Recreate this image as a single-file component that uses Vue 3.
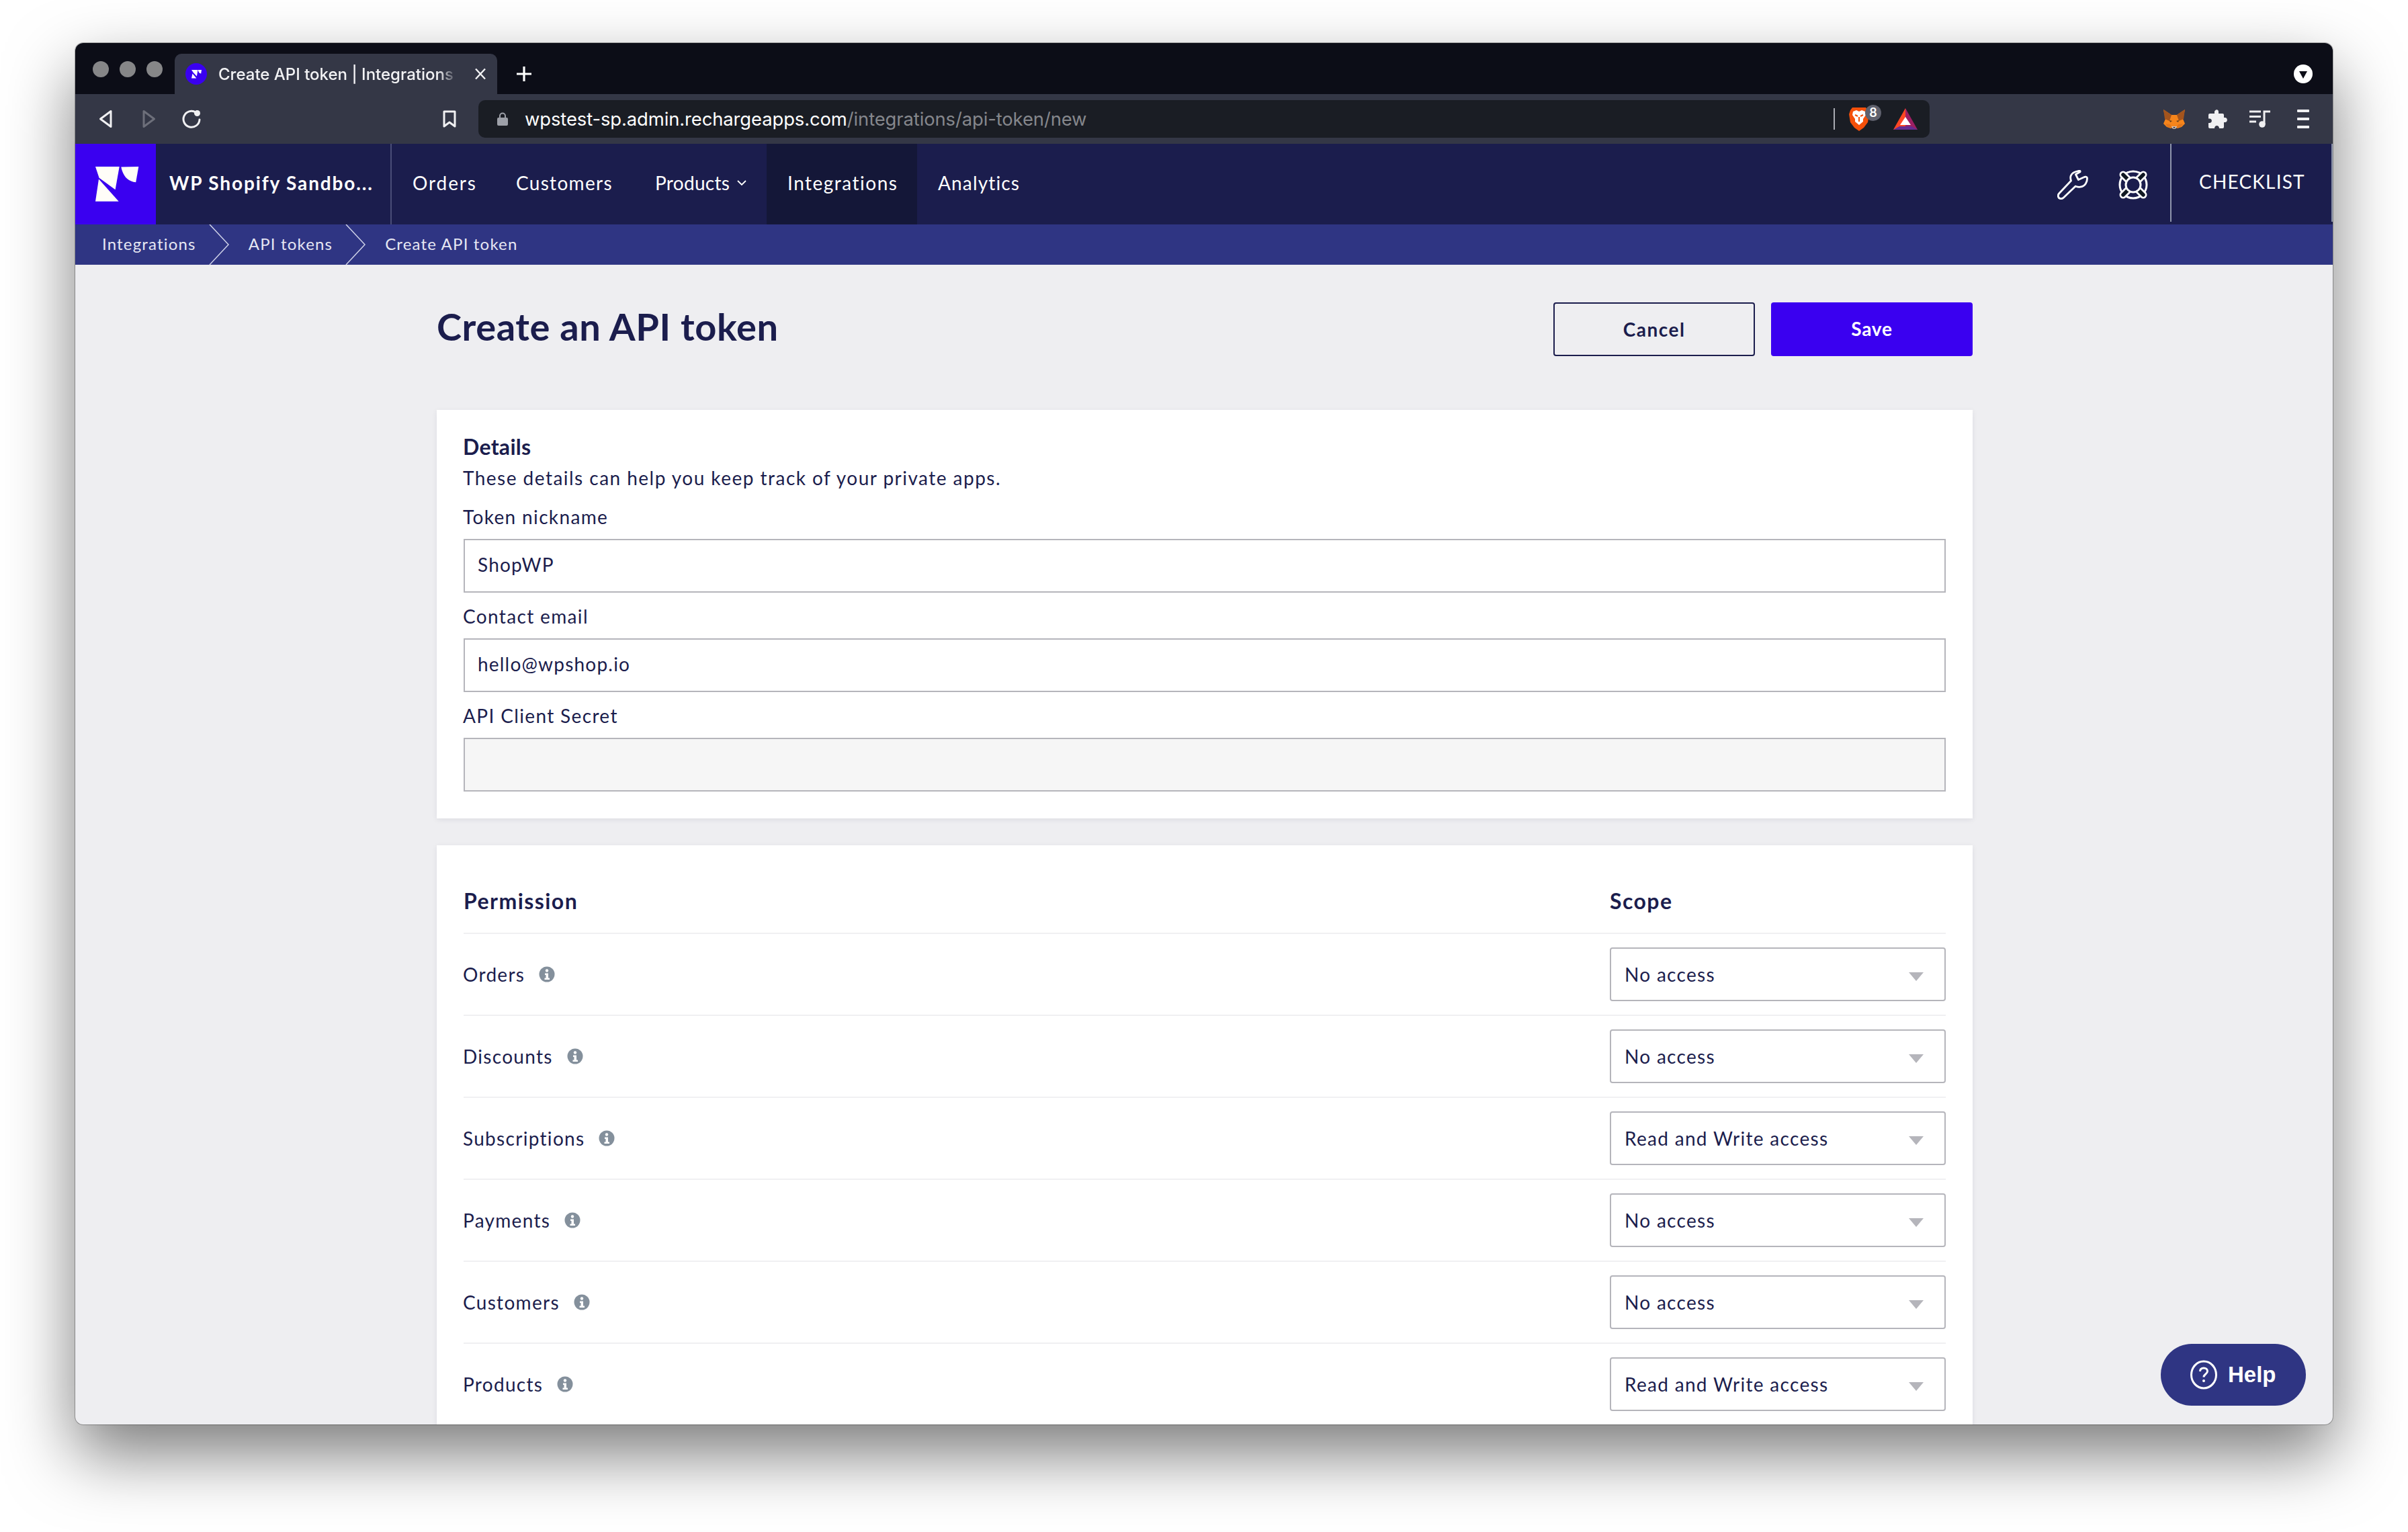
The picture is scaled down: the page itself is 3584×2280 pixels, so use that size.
<script setup>
const navLinks = [
  { label: 'Orders', width: 154, spacing: 1.9 },
  { label: 'Customers', width: 207, spacing: 1.3 },
  { label: 'Products', width: 197, spacing: 0.3, caret: true },
  { label: 'Integrations', width: 224, spacing: 1.5, active: true },
  { label: 'Analytics', width: 180, spacing: 1.15 }
]
const crumbs = ['Integrations', 'API tokens', 'Create API token']
const fields = [
  { label: 'Token nickname', value: 'ShopWP' },
  { label: 'Contact email', value: 'hello@wpshop.io' },
  { label: 'API Client Secret', value: '', disabled: true }
]
const perms = [
  { name: 'Orders', scope: 'No access' },
  { name: 'Discounts', scope: 'No access' },
  { name: 'Subscriptions', scope: 'Read and Write access' },
  { name: 'Payments', scope: 'No access' },
  { name: 'Customers', scope: 'No access' },
  { name: 'Products', scope: 'Read and Write access' }
]
</script>

<template>
  <div class="stage">
    <div class="window">
      <div class="tabstrip">
        <div class="lights"><i></i><i></i><i></i></div>
        <div class="tab">
          <svg class="favicon" viewBox="0 0 32 32">
            <circle cx="16" cy="16" r="16" fill="#3a00f0" />
            <path d="M9 10h9.500l-1.600 9.500-5-5.200zM10.500 15.500l5.800 7H9zM18.800 10H24l-.8 5.500c-2.500 0-4-2.400-4.400-5.500z" fill="#fff" />
          </svg>
          <span class="tab-title">Create API token | Integrations</span>
          <svg class="tab-close" viewBox="0 0 18 18"><path d="M2 1.500l14 15M16 1.500L2 16.500" stroke="#f2f2f4" stroke-width="2.400" /></svg>
        </div>
        <svg class="plus" viewBox="0 0 24 24"><path d="M12 1v22M1 12h22" stroke="#fff" stroke-width="3.200" /></svg>
        <div class="tabmenu"><svg viewBox="0 0 28 28"><circle cx="14" cy="14" r="14" fill="#fff" /><path d="M8 10h12l-6 11z" fill="#0c0d17" /></svg></div>
      </div>

      <div class="toolbar">
        <svg class="tb-back" viewBox="0 0 20 28"><path d="M18 2.500v23L2.500 14z" fill="none" stroke="#f0f0f2" stroke-width="3" stroke-linejoin="round" /></svg>
        <svg class="tb-fwd" viewBox="0 0 20 28"><path d="M2 2.500v23L17.500 14z" fill="none" stroke="#6d6f7a" stroke-width="3" stroke-linejoin="round" /></svg>
        <svg class="tb-reload" viewBox="0 0 28 28">
          <path d="M20.500 4.200A12 12 0 1 0 26 15" fill="none" stroke="#f0f0f2" stroke-width="3" stroke-linecap="round" />
          <circle cx="22.500" cy="5.500" r="4.500" fill="#f0f0f2" />
        </svg>
        <svg class="tb-mark" viewBox="0 0 20 26"><path d="M2 2h16v22l-8-6-8 6z" fill="none" stroke="#f0f0f2" stroke-width="3" stroke-linejoin="round" /></svg>
        <div class="address">
          <svg class="lock" viewBox="0 0 16 20"><path d="M4 9V5.500a4 4 0 0 1 8 0V9" fill="none" stroke="#9da0a8" stroke-width="2" /><rect x="0" y="8" width="16" height="12" rx="2" fill="#9da0a8" /></svg>
          <span class="url"><b>wpstest-sp.admin.rechargeapps.com</b>/integrations/api-token/new</span>
          <span class="addr-sep"></span>
          <span class="brave">
            <svg viewBox="0 0 30 36">
              <path d="M5 1h20l3 4 2 6-2 12-6 8-7 5-7-5-6-8L0 11l2-6z" fill="#f4500a" />
              <path d="M6 7l5-2 4 2 4-2 5 2 1 5-4 6v4l-6 5-6-5v-4L5 12z" fill="#fff" />
              <path d="M9 12l4 2M21 12l-4 2M15 15v7" stroke="#f4500a" stroke-width="2" />
            </svg>
            <em>8</em>
          </span>
          <svg class="bat" viewBox="0 0 36 32">
            <path d="M18 0l18 32H18z" fill="#9e1f63" />
            <path d="M18 0L0 32h18z" fill="#ff4724" />
            <path d="M0 32l9-5h18l9 5z" fill="#662d91" />
            <path d="M18 13l8 12H10z" fill="#fff" />
          </svg>
        </div>
        <svg class="fox" viewBox="0 0 32 29">
          <path d="M0 0l12 8h8l12-8-3 14 3 7-5 5-6 2-2-1h-6l-2 1-6-2-5-5 3-7z" fill="#f6851b" />
          <path d="M0 0l12 8-3 9-7-3zM32 0L20 8l3 9 7-3z" fill="#a3541d" />
          <path d="M3 21l7 1 3 5-7-1zM29 21l-7 1-3 5 7-1z" fill="#e2761b" />
          <path d="M12 25h8l-1 3-3 1-3-1z" fill="#d7c1b3" />
          <path d="M14 26h4l-2 2z" fill="#233447" />
          <path d="M9 16l4 1-3 2zM23 16l-4 1 3 2z" fill="#5c3b1f" />
        </svg>
        <svg class="puzzle" viewBox="0 0 29 28">
          <path d="M11 1.500c1.500-2 5-1.500 5 1.800V6h6a2 2 0 0 1 2 2v4h1.500c4.500 0 4.500 7 0 7H24v7a2 2 0 0 1-2 2h-5c0-5.500-7-5.500-7 0H3a2 2 0 0 1-2-2v-6h1.500c4.500 0 4.500-6.500 0-6.500H1V8a2 2 0 0 1 2-2h7V3.300c0-.7.400-1.300 1-1.800z" fill="#f0f0f2" />
        </svg>
        <svg class="music" viewBox="0 0 32 26">
          <path d="M0 2h17M0 9.500h17M0 17h10" stroke="#f0f0f2" stroke-width="3" />
          <path d="M22 21V2h9" fill="none" stroke="#f0f0f2" stroke-width="3" />
          <circle cx="19" cy="21" r="4.800" fill="#f0f0f2" />
        </svg>
        <div class="hamb"><i></i><i></i><i></i></div>
      </div>

      <header class="nav">
        <div class="brand">
          <svg viewBox="0 0 65 52">
            <path d="M0 0h35.700l-6.100 34.300L5.600 16.700z" fill="#fffdf8" />
            <path d="M5 18.500l29.700 33.200H0z" fill="#fffdf8" />
            <path d="M38.300.5L64.300 0l-4.100 23.300C48 22 41 14 38.300.5z" fill="#fffdf8" />
          </svg>
        </div>
        <div class="store">WP Shopify Sandbo...</div>
        <nav class="links">
          <a v-for="l in navLinks" :key="l.label" class="link" :class="{ active: l.active }" :style="{ width: l.width + 'px', letterSpacing: l.spacing + 'px' }">
            {{ l.label }}
            <svg v-if="l.caret" class="caret" viewBox="0 0 14 9"><path d="M1 1l6 6 6-6" fill="none" stroke="#fff" stroke-width="1.800" /></svg>
          </a>
        </nav>
        <div class="nav-right">
          <svg class="wrench" viewBox="0 0 46 44">
            <path d="M31 1.500c3.500-1 3.300.5 3 1.300l-6.600 3.700 4 8 8.300-3.800c1-.6 4.800-1.500 4.800 2 0 4.500-2.500 11.500-10 12.500-3.600.5-5-.2-7.500-1L9.500 41c-3 3-7.200 1.800-8-1-.8-2.500 0-4 1.500-5.500L20.500 16c-1-3-1.300-5-.3-7.500C22 4.500 26 2.500 31 1.500z" fill="none" stroke="#fff" stroke-width="2.800" stroke-linejoin="round" />
          </svg>
          <svg class="buoy" viewBox="0 0 44 44">
            <circle cx="22" cy="22" r="20" fill="none" stroke="#fff" stroke-width="3" />
            <g stroke="#fff" stroke-width="11" stroke-linecap="round"><path d="M7 7l8 8M37 7l-8 8M7 37l8-8M37 37l-8-8" /></g>
            <g stroke="#101822" stroke-width="5.500" stroke-linecap="round"><path d="M7 7l8 8M37 7l-8 8M7 37l8-8M37 37l-8-8" /></g>
            <circle cx="22" cy="22" r="11" fill="#1b1d4d" stroke="#fff" stroke-width="3" />
          </svg>
          <div class="checklist"><span>CHECKLIST</span></div>
        </div>
      </header>

      <div class="crumbs">
        <template v-for="(c, i) in crumbs" :key="c">
          <span class="crumb">{{ c }}</span>
          <svg v-if="i < crumbs.length - 1" class="crumb-sep" viewBox="0 0 30 60"><path d="M1 0l28 30L1 60" fill="none" stroke="#cfd2e8" stroke-width="1.500" /></svg>
        </template>
      </div>

      <main class="page">
        <div class="column">
          <div class="head">
            <h1>Create an API token</h1>
            <div class="actions">
              <button class="btn ghost">Cancel</button>
              <button class="btn primary">Save</button>
            </div>
          </div>

          <section class="card details">
            <h2>Details</h2>
            <p>These details can help you keep track of your private apps.</p>
            <div v-for="f in fields" :key="f.label" class="field">
              <label>{{ f.label }}</label>
              <div class="input" :class="{ disabled: f.disabled }">{{ f.value }}</div>
            </div>
          </section>

          <section class="card perms">
            <div class="row headrow">
              <span>Permission</span>
              <span class="scope-h">Scope</span>
            </div>
            <div v-for="p in perms" :key="p.name" class="row">
              <span class="perm">
                {{ p.name }}
                <svg class="info" viewBox="0 0 24 24">
                  <circle cx="12" cy="12" r="11.500" fill="#84909c" />
                  <circle cx="12" cy="6.500" r="2.200" fill="#fff" />
                  <path d="M9 10.500h5v7h2v2.500H8.500v-2.500h2V13H9z" fill="#fff" />
                </svg>
              </span>
              <div class="select">
                <span>{{ p.scope }}</span>
                <i class="arrow"></i>
              </div>
            </div>
          </section>
        </div>

        <button class="help">
          <svg viewBox="0 0 40 44"><ellipse cx="20" cy="22" rx="18.500" ry="20" fill="none" stroke="#fff" stroke-width="3" /><path d="M14.500 17c0-3.500 2.500-5 5.500-5s5.500 1.800 5.500 4.800c0 4.200-5.500 4.200-5.500 8.700" fill="none" stroke="#fff" stroke-width="3" /><circle cx="20" cy="31" r="2" fill="#fff" /></svg>
          <span>Help</span>
        </button>
      </main>
    </div>
  </div>
</template>

<style scoped>
.stage { width: 3584px; height: 2280px; background: #fff; padding: 64px 0 0 112px; box-sizing: border-box; overflow: hidden; }
.window {
  width: 3360px; height: 2056px; border-radius: 12px; overflow: hidden; display: flex; flex-direction: column;
  background: #eeeef1; position: relative;
  box-shadow: 0 0 0 1px rgba(0,0,0,.28), 0 44px 100px rgba(0,0,0,.52);
}

.tabstrip { height: 76px; flex: none; background: #0c0d17; display: flex; }
.lights { display: flex; gap: 16px; padding: 27px 0 0 26px; }
.lights i { width: 24px; height: 24px; border-radius: 50%; background: #868688; display: block; }
.tab { margin: 16px 0 0 18px; width: 480px; height: 60px; background: #343746; border-radius: 10px 10px 0 0; display: flex; align-items: center; position: relative; box-sizing: border-box; padding-left: 16px; }
.favicon { width: 32px; height: 32px; flex: none; }
.tab-title { margin-left: 17px; width: 356px; font: 500 24px Inter, sans-serif; color: #f2f2f4; white-space: nowrap; overflow: hidden; -webkit-mask-image: linear-gradient(90deg, #000 92%, transparent); mask-image: linear-gradient(90deg, #000 92%, transparent); }
.tab-close { width: 18px; height: 18px; margin-left: 25px; flex: none; }
.plus { width: 24px; height: 24px; margin: 34px 0 0 28px; flex: none; }
.tabmenu { margin-left: auto; padding: 32px 30px 0 0; }
.tabmenu svg { width: 28px; height: 28px; display: block; }

.toolbar { height: 74px; flex: none; background: #343746; display: flex; align-items: center; position: relative; }
.tb-back { width: 20px; height: 28px; margin-left: 35px; flex: none; }
.tb-fwd { width: 20px; height: 28px; margin-left: 45px; flex: none; }
.tb-reload { width: 28px; height: 28px; margin-left: 39px; flex: none; }
.tb-mark { width: 20px; height: 26px; margin-left: 360px; flex: none; }
.address { width: 2160px; height: 56px; margin-left: 33px; background: #1a1d24; border-radius: 10px; display: flex; align-items: center; flex: none; box-sizing: border-box; padding-left: 28px; }
.lock { width: 16px; height: 20px; flex: none; }
.url { margin-left: 25px; font: 400 27.400px Inter, sans-serif; color: #85878c; width: 1948px; white-space: nowrap; flex: none; letter-spacing: -.1px; }
.url b { font-weight: 400; color: #fff; }
.addr-sep { width: 2px; height: 32px; background: #a9abb2; flex: none; }
.brave { position: relative; width: 30px; height: 36px; margin-left: 21px; flex: none; }
.brave svg { width: 30px; height: 36px; display: block; }
.brave em { position: absolute; left: 24px; top: -3px; width: 24px; height: 24px; border-radius: 12px; background: #5f616d; color: #fff; font: 600 18px/24px Inter, sans-serif; text-align: center; }
.bat { width: 36px; height: 32px; margin-left: 36px; flex: none; }
.fox { width: 32px; height: 29px; margin-left: 348px; flex: none; }
.puzzle { width: 29px; height: 28px; margin-left: 34px; flex: none; }
.music { width: 32px; height: 26px; margin-left: 33px; flex: none; }
.hamb { width: 18px; margin-left: 39px; display: flex; flex-direction: column; gap: 8px; }
.hamb i { display: block; height: 4px; background: #f0f0f2; border-radius: 1px; }

.nav { height: 120px; flex: none; background: #1b1d4d; display: flex; color: #fff; font-family: Lato, sans-serif; }
.brand { width: 120px; background: #3a00f0; display: flex; align-items: center; justify-content: center; flex: none; }
.brand svg { width: 65px; height: 52px; margin-left: 4px; }
.store { width: 351px; box-sizing: border-box; padding-left: 20px; border-right: 2px solid #4a4d78; font-size: 28px; font-weight: 700; line-height: 116px; letter-spacing: 1.850px; white-space: nowrap; flex: none; }
.links { display: flex; }
.link { display: flex; align-items: center; padding: 0 0 4px 31px; box-sizing: border-box; font-size: 28px; white-space: nowrap; flex: none; }
.link.active { background: #141738; }
.caret { width: 14px; height: 9px; margin-left: 11px; flex: none; }
.nav-right { margin-left: auto; display: flex; align-items: flex-start; height: 116px; }
.wrench { width: 46px; height: 44px; margin-top: 39px; }
.buoy { width: 44px; height: 44px; margin: 39px 0 0 45px; }
.checklist { margin-left: 33px; width: 242px; height: 116px; box-sizing: border-box; border-left: 2px solid #8f96ad; border-right: 2px solid #8f96ad; display: flex; padding: 38px 0 0 41px; font-size: 28px; letter-spacing: 1.200px; line-height: 36px; }

.crumbs { height: 60px; flex: none; background: #2f3583; display: flex; align-items: center; color: #e6e7f3; font: 400 24px Lato, sans-serif; letter-spacing: 1.180px; padding-left: 40px; }
.crumb { padding-bottom: 3px; }
.crumb-sep { width: 30px; height: 60px; margin: 0 29px 0 19px; flex: none; }

.page { flex: 1; min-height: 0; overflow: hidden; position: relative; font-family: Lato, sans-serif; color: #1b1d4d; }
.column { width: 2286px; margin-left: 538px; }
.head { display: flex; justify-content: space-between; height: 216px; padding-top: 56px; box-sizing: border-box; }
h1 { margin: 0; font-size: 56px; line-height: 72px; font-weight: 700; letter-spacing: .6px; }
.actions { display: flex; gap: 24px; }
.btn { width: 300px; height: 80px; border-radius: 4px; font: 700 28px Lato, sans-serif; letter-spacing: 1.500px; box-sizing: border-box; }
.ghost { background: transparent; border: 2px solid #1b1d4d; color: #1b1d4d; }
.primary { background: #3a00f0; border: 0; color: #fff; padding-bottom: 4px; letter-spacing: .8px; }

.card { background: #fff; box-shadow: 0 2px 8px rgba(30,30,60,.08); padding: 0 40px; }
.details { padding-top: 35px; padding-bottom: 40px; height: 608px; box-sizing: border-box; margin-bottom: 40px; }
h2 { margin: 0; font-size: 32px; line-height: 40px; font-weight: 700; margin-left: -1px; letter-spacing: .3px; }
.details p { margin: 6px 0 20px -1px; font-size: 28px; line-height: 40px; letter-spacing: 1.470px; }
.field { margin-top: 17px; }
.details p + .field { margin-top: 0; }
.field label { display: block; font-size: 28px; line-height: 40px; margin: -2px 0 13px -1px; letter-spacing: 1.350px; }
.input { height: 80px; border: 2px solid #b5b5bb; box-sizing: border-box; padding: 0 19px; line-height: 72px; font-size: 28px; letter-spacing: 1.200px; }
.input.disabled { background: #f6f6f6; }

.perms { height: 1000px; }
.row { height: 122px; display: flex; align-items: center; justify-content: space-between; border-bottom: 2px solid #f0f0f2; box-sizing: border-box; font-size: 28px; letter-spacing: 1.300px; }
.headrow { height: 132px; padding-top: 34px; font-size: 32px; font-weight: 700; letter-spacing: 1.450px; }
.scope-h { width: 500px; }
.perm { display: flex; align-items: center; gap: 21px; margin-left: -1px; }
.info { width: 24px; height: 24px; }
.select { width: 500px; height: 80px; border: 2px solid #b5b5bb; border-radius: 4px; box-sizing: border-box; display: flex; align-items: center; justify-content: space-between; padding: 0 31px 0 20px; }
.arrow { width: 0; height: 0; border-left: 11px solid transparent; border-right: 11px solid transparent; border-top: 13px solid #b5b5bb; margin-top: 6px; }

.help { position: absolute; left: 3104px; top: 1606px; width: 216px; height: 92px; border: 0; border-radius: 46px; background: #2f3583; color: #fff; display: flex; align-items: center; padding: 0 0 0 44px; box-sizing: border-box; font: 700 33px "Liberation Sans", sans-serif; }
.help svg { width: 40px; height: 44px; margin-right: 16px; }
</style>
